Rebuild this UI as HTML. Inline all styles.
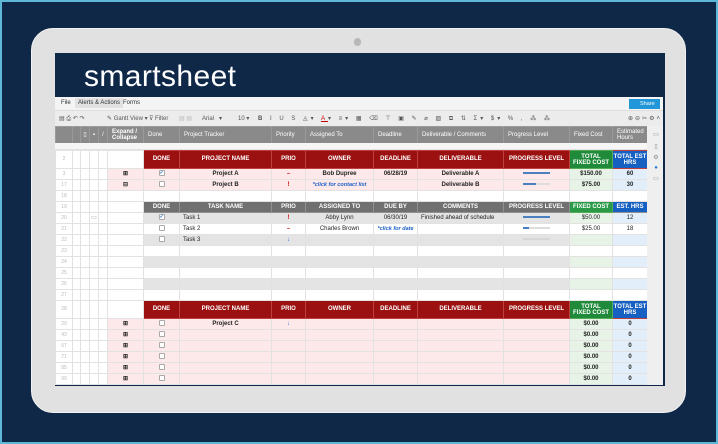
<!DOCTYPE html>
<html><head><meta charset="utf-8"><style>
*{margin:0;padding:0;box-sizing:border-box}
body{width:718px;height:444px;overflow:hidden;background:#0f2848;font-family:"Liberation Sans",sans-serif;position:relative}
.frame{position:absolute;left:0;top:0;width:718px;height:444px;border:2px solid #5cb8d6}
.bezel{position:absolute;left:31px;top:28px;width:655px;height:385px;background:#e1e1e1;border-radius:22px;border:1px solid #f2f2f2}
.cam{position:absolute;left:354px;top:38px;width:7px;height:8px;border-radius:4px;background:#b8b8b8}
.screen{position:absolute;left:55px;top:53px;width:610px;height:333px;background:#fff;overflow:hidden;border-right:2px solid #0f2848;border-bottom:1px solid #0f2848}
.hdr{position:absolute;left:0;top:0;width:610px;height:44px;background:#0f2848}
.logo{position:absolute;left:29px;top:7px;color:#fff;font-size:30px;letter-spacing:0.4px}
.menu{position:absolute;left:0;top:44px;width:610px;height:13px;background:#f4f4f4;font-size:6px;color:#333}
.menu span{position:absolute;top:3px}
.share{position:absolute;left:574px;top:2px;width:31px;height:10px;background:#2196d8;color:#fff;font-size:5.5px;padding:2px 0 0 11px}
.tool{position:absolute;left:0;top:57px;width:610px;height:16px;background:#ececec;font-size:6px;color:#555;border-top:1px solid #ddd;white-space:nowrap}
.tool span{position:absolute;top:4px;white-space:nowrap}
.strip{position:absolute;left:0;top:90px;width:592px;height:7px;background:#f6f6f6;border-bottom:1px solid #e2e2e2}
table{position:absolute;left:0;border-collapse:collapse;table-layout:fixed;font-size:6px;line-height:7px}
td{border:1px solid #e2e2e2;height:11px;padding:0;text-align:center;color:#222;white-space:nowrap;overflow:hidden;font-weight:bold}
tr.ch td{background:#8a8a8a;color:#fff;border-color:#9a9a9a;height:17px;font-weight:normal;text-align:left;padding-left:4px;line-height:6.5px}
td.rn{color:#bbb;font-weight:normal;font-size:5px}
tr.rh td{height:18px}
tr.rh td.h{background:#9b1111;color:#fff;border-color:#c04040}
tr.gh td.h{background:#707070;color:#fff;border-color:#909090}
td.gr{background:#1f8a3a!important;color:#fff;line-height:6px;border-color:#5a5!important}
td.bl{background:#1560c0!important;color:#fff;line-height:6px}
.pk{background:#fde9ea}
.gy{background:#e4e4e4}
.lg{background:#e6f3e6}
.lb{background:#e2effa}
.cb{display:inline-block;width:6px;height:6px;border:1px solid #aaa;background:#fff;border-radius:1px;vertical-align:middle;font-size:5px;line-height:4px;color:#2a6fd0}
.bar{display:inline-block;width:27px;height:2px;background:#ddd;vertical-align:middle}
.bar i{display:block;height:2px;background:#4a80c0}
.lnk{color:#1a5fc8;font-style:italic}
.side{position:absolute;left:592px;top:73px;width:18px;height:260px;background:#efefef;font-size:6px;color:#888;text-align:center}
</style></head><body>
<div class="frame"></div>
<div class="bezel"></div>
<div class="cam"></div>
<div class="screen">
<div class="hdr"><div class="logo">smartsheet</div></div>
<div class="menu"><span style="left:6px">File</span><span style="left:20px;top:1px;background:#e2e2e2;padding:2px 3px">Alerts &amp; Actions</span><span style="left:68px">Forms</span><div class="share">Share</div></div>
<div class="tool"><span style="left:4px">▤ ⎙ ↶ ↷</span><span style="left:52px">✎ Gantt View ▾</span><span style="left:94px">⊽ Filter</span><span style="left:124px;color:#bbb">▤ ▤</span><span style="left:147px">Arial &nbsp;&nbsp;▾</span><span style="left:183px">10 ▾</span><span style="left:203px;letter-spacing:3px"><b>B</b> I U S ◬▾ <u style="color:#c00">A</u>▾ ≡▾ ▦ ⌫ ⊤ ▣ ✎ ⌀ ▧ ⧉ ⇅ Σ▾ $▾ % , ⁂ ⁂</span><span style="left:573px;letter-spacing:2px">⊕⊖✂⚙˄</span></div>
<table style="top:73px">
<colgroup><col style="width:17px"><col style="width:8px"><col style="width:9px"><col style="width:9px"><col style="width:9px"><col style="width:36px"><col style="width:36px"><col style="width:92px"><col style="width:34px"><col style="width:68px"><col style="width:44px"><col style="width:86px"><col style="width:66px"><col style="width:43px"><col style="width:35px"></colgroup>
<tr class="ch"><td></td><td></td><td style="padding:0;text-align:center">▯</td><td style="padding:0;text-align:center">▪</td><td style="padding:0;text-align:center">/</td><td style="font-weight:bold">Expand /<br>Collapse</td><td>Done</td><td>Project Tracker</td><td>Priority</td><td>Assigned To</td><td>Deadline</td><td>Deliverable / Comments</td><td>Progress Level</td><td>Fixed Cost</td><td>Estimated<br>Hours</td></tr>
</table>
<div class="strip"></div>
<table style="top:97px">
<colgroup><col style="width:17px"><col style="width:8px"><col style="width:9px"><col style="width:9px"><col style="width:9px"><col style="width:36px"><col style="width:36px"><col style="width:92px"><col style="width:34px"><col style="width:68px"><col style="width:44px"><col style="width:86px"><col style="width:66px"><col style="width:43px"><col style="width:35px"></colgroup>
<tr class="rh"><td class="rn">2</td><td></td><td></td><td></td><td></td><td></td><td class="h">DONE</td><td class="h">PROJECT NAME</td><td class="h">PRIO</td><td class="h">OWNER</td><td class="h">DEADLINE</td><td class="h">DELIVERABLE</td><td class="h">PROGRESS LEVEL</td><td class="h gr">TOTAL<br>FIXED COST</td><td class="h bl">TOTAL EST<br>HRS</td></tr>
<tr><td class="rn">3</td><td></td><td></td><td></td><td></td><td class="pk">⊞</td><td class="pk"><span class="cb">✓</span></td><td class="pk">Project A</td><td class="pk" style="color:#c00">–</td><td class="pk">Bob Dupree</td><td class="pk">06/28/19</td><td class="pk">Deliverable A</td><td class="pk"><span class="bar"><i style="width:27px"></i></span></td><td class="lg">$150.00</td><td class="lb">60</td></tr>
<tr><td class="rn">17</td><td></td><td></td><td></td><td></td><td class="pk">⊟</td><td class="pk"><span class="cb"></span></td><td class="pk">Project B</td><td class="pk" style="color:#c00">!</td><td class="pk lnk" style="font-size:5.5px">*click for contact list</td><td class="pk"></td><td class="pk">Deliverable B</td><td class="pk"><span class="bar"><i style="width:13px"></i></span></td><td class="lg">$75.00</td><td class="lb">30</td></tr>
<tr><td class="rn">18</td><td></td><td></td><td></td><td></td><td></td><td></td><td></td><td></td><td></td><td></td><td></td><td></td><td></td><td></td></tr>
<tr class="gh"><td class="rn">19</td><td></td><td></td><td></td><td></td><td></td><td class="h">DONE</td><td class="h">TASK NAME</td><td class="h">PRIO</td><td class="h">ASSIGNED TO</td><td class="h">DUE BY</td><td class="h">COMMENTS</td><td class="h">PROGRESS LEVEL</td><td class="h gr" style="background:#2a9a48!important">FIXED COST</td><td class="h bl">EST. HRS</td></tr>
<tr><td class="rn">20</td><td></td><td></td><td style="color:#999;font-weight:normal">▭</td><td></td><td></td><td class="gy"><span class="cb">✓</span></td><td class="gy" style="text-align:left;padding-left:3px;font-weight:normal">Task 1</td><td class="gy" style="color:#c00">!</td><td class="gy" style="font-weight:normal">Abby Lynn</td><td class="gy" style="font-weight:normal">06/30/19</td><td class="gy" style="text-align:left;padding-left:3px;font-weight:normal">Finished ahead of schedule</td><td class="gy"><span class="bar"><i style="width:27px"></i></span></td><td class="lg" style="font-weight:normal">$50.00</td><td class="lb" style="font-weight:normal">12</td></tr>
<tr><td class="rn">21</td><td></td><td></td><td></td><td></td><td></td><td><span class="cb"></span></td><td style="text-align:left;padding-left:3px;font-weight:normal">Task 2</td><td style="color:#c00">–</td><td style="font-weight:normal">Charles Brown</td><td class="lnk" style="font-size:5.5px">*click for date</td><td></td><td><span class="bar"><i style="width:6px"></i></span></td><td style="font-weight:normal">$25.00</td><td style="font-weight:normal">18</td></tr>
<tr><td class="rn">22</td><td></td><td></td><td></td><td></td><td></td><td class="gy"><span class="cb"></span></td><td class="gy" style="text-align:left;padding-left:3px;font-weight:normal">Task 3</td><td class="gy" style="color:#2a6fd0">↓</td><td class="gy"></td><td class="gy"></td><td class="gy"></td><td class="gy"><span class="bar" style="background:#d6d6d6"></span></td><td class="lg"></td><td class="lb"></td></tr>
<tr><td class="rn">23</td><td></td><td></td><td></td><td></td><td></td><td></td><td></td><td></td><td></td><td></td><td></td><td></td><td></td><td></td></tr>
<tr><td class="rn">24</td><td></td><td></td><td></td><td></td><td></td><td class="gy"></td><td class="gy"></td><td class="gy"></td><td class="gy"></td><td class="gy"></td><td class="gy"></td><td class="gy"></td><td class="lg"></td><td class="lb"></td></tr>
<tr><td class="rn">25</td><td></td><td></td><td></td><td></td><td></td><td></td><td></td><td></td><td></td><td></td><td></td><td></td><td></td><td></td></tr>
<tr><td class="rn">26</td><td></td><td></td><td></td><td></td><td></td><td class="gy"></td><td class="gy"></td><td class="gy"></td><td class="gy"></td><td class="gy"></td><td class="gy"></td><td class="gy"></td><td class="lg"></td><td class="lb"></td></tr>
<tr><td class="rn">27</td><td></td><td></td><td></td><td></td><td></td><td></td><td></td><td></td><td></td><td></td><td></td><td></td><td></td><td></td></tr>
<tr class="rh"><td class="rn">28</td><td></td><td></td><td></td><td></td><td></td><td class="h">DONE</td><td class="h">PROJECT NAME</td><td class="h">PRIO</td><td class="h">OWNER</td><td class="h">DEADLINE</td><td class="h">DELIVERABLE</td><td class="h">PROGRESS LEVEL</td><td class="h gr">TOTAL<br>FIXED COST</td><td class="h bl">TOTAL EST<br>HRS</td></tr>
<tr><td class="rn">29</td><td></td><td></td><td></td><td></td><td class="pk">⊞</td><td class="pk"><span class="cb"></span></td><td class="pk">Project C</td><td class="pk" style="color:#2a6fd0">↓</td><td class="pk"></td><td class="pk"></td><td class="pk"></td><td class="pk"></td><td class="lg">$0.00</td><td class="lb">0</td></tr>
<tr><td class="rn">43</td><td></td><td></td><td></td><td></td><td class="pk">⊞</td><td class="pk"><span class="cb"></span></td><td class="pk"></td><td class="pk"></td><td class="pk"></td><td class="pk"></td><td class="pk"></td><td class="pk"></td><td class="lg">$0.00</td><td class="lb">0</td></tr>
<tr><td class="rn">57</td><td></td><td></td><td></td><td></td><td class="pk">⊞</td><td class="pk"><span class="cb"></span></td><td class="pk"></td><td class="pk"></td><td class="pk"></td><td class="pk"></td><td class="pk"></td><td class="pk"></td><td class="lg">$0.00</td><td class="lb">0</td></tr>
<tr><td class="rn">71</td><td></td><td></td><td></td><td></td><td class="pk">⊞</td><td class="pk"><span class="cb"></span></td><td class="pk"></td><td class="pk"></td><td class="pk"></td><td class="pk"></td><td class="pk"></td><td class="pk"></td><td class="lg">$0.00</td><td class="lb">0</td></tr>
<tr><td class="rn">85</td><td></td><td></td><td></td><td></td><td class="pk">⊞</td><td class="pk"><span class="cb"></span></td><td class="pk"></td><td class="pk"></td><td class="pk"></td><td class="pk"></td><td class="pk"></td><td class="pk"></td><td class="lg">$0.00</td><td class="lb">0</td></tr>
<tr><td class="rn">99</td><td></td><td></td><td></td><td></td><td class="pk">⊞</td><td class="pk"><span class="cb"></span></td><td class="pk"></td><td class="pk"></td><td class="pk"></td><td class="pk"></td><td class="pk"></td><td class="pk"></td><td class="lg">$0.00</td><td class="lb">0</td></tr>
</table>
<div class="side"><div style="margin-top:5px">▭</div><div style="margin-top:5px">▯</div><div style="margin-top:4px">⚙</div><div style="margin-top:4px;color:#2a7fd0">●</div><div style="margin-top:4px">▭</div></div>
</div>
</body></html>
